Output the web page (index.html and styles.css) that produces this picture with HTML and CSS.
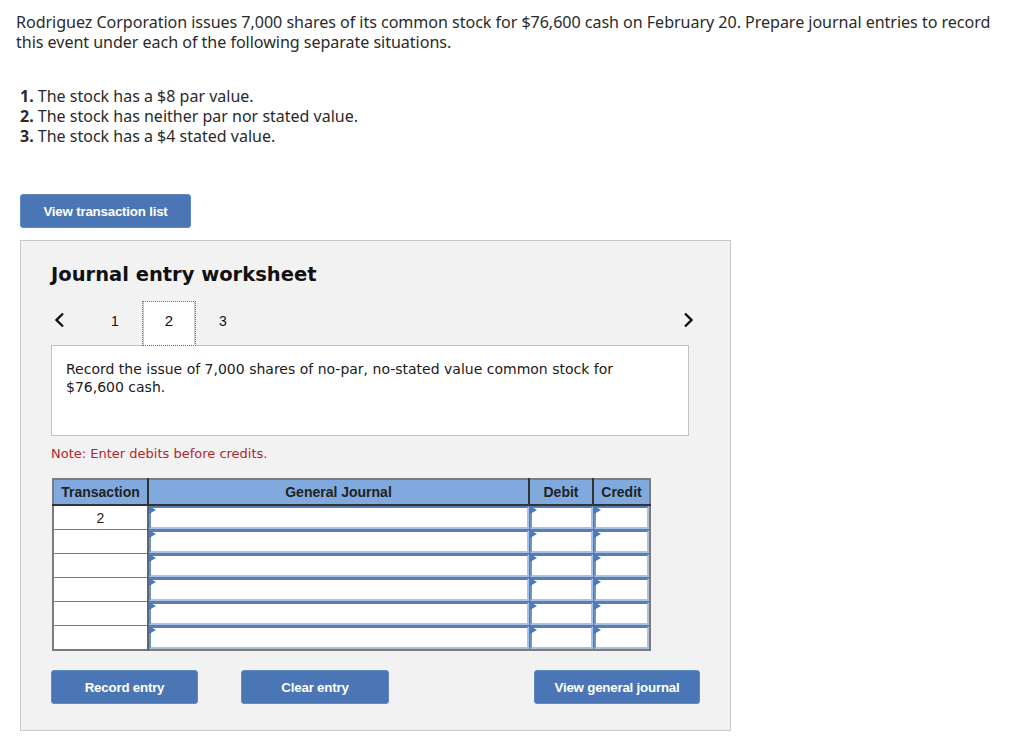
FILE: index.html
```html
<!DOCTYPE html>
<html>
<head>
<meta charset="utf-8">
<link rel="stylesheet" href="styles.css">
</head>
<body>
<div class="page">
  <p class="question">Rodriguez Corporation issues 7,000 shares of its common stock for $76,600 cash on February 20. Prepare journal entries to record this event under each of the following separate situations.</p>
  <ol class="situations">
    <li><b>1.</b> The stock has a $8 par value.</li>
    <li><b>2.</b> The stock has neither par nor stated value.</li>
    <li><b>3.</b> The stock has a $4 stated value.</li>
  </ol>
  <button class="btn btn-list">View transaction list</button>
  <div class="panel">
    <h2 class="title">Journal entry worksheet</h2>
    <div class="nav">
      <span class="chev chev-left"><svg width="12" height="16" viewBox="0 0 12 16"><polyline points="9,1.5 2.5,8 9,14.5" fill="none" stroke="#111" stroke-width="2.4"/></svg></span>
      <span class="step">1</span>
      <span class="step step-active">2</span>
      <span class="step">3</span>
      <span class="chev chev-right"><svg width="12" height="16" viewBox="0 0 12 16"><polyline points="3,1.5 9.5,8 3,14.5" fill="none" stroke="#111" stroke-width="2.4"/></svg></span>
    </div>
    <div class="desc">Record the issue of 7,000 shares of no-par, no-stated value common stock for $76,600 cash.</div>
    <p class="note">Note: Enter debits before credits.</p>
    <table class="journal">
      <colgroup>
        <col class="c-tr"><col class="c-gj"><col class="c-dr"><col class="c-cr">
      </colgroup>
      <thead>
        <tr><th>Transaction</th><th>General Journal</th><th>Debit</th><th>Credit</th></tr>
      </thead>
      <tbody>
        <tr><td class="tr">2</td><td class="inp"><div class="box"></div></td><td class="inp"><div class="box"></div></td><td class="inp"><div class="box"></div></td></tr>
        <tr><td class="tr"></td><td class="inp"><div class="box"></div></td><td class="inp"><div class="box"></div></td><td class="inp"><div class="box"></div></td></tr>
        <tr><td class="tr"></td><td class="inp"><div class="box"></div></td><td class="inp"><div class="box"></div></td><td class="inp"><div class="box"></div></td></tr>
        <tr><td class="tr"></td><td class="inp"><div class="box"></div></td><td class="inp"><div class="box"></div></td><td class="inp"><div class="box"></div></td></tr>
        <tr><td class="tr"></td><td class="inp"><div class="box"></div></td><td class="inp"><div class="box"></div></td><td class="inp"><div class="box"></div></td></tr>
        <tr><td class="tr"></td><td class="inp"><div class="box"></div></td><td class="inp"><div class="box"></div></td><td class="inp"><div class="box"></div></td></tr>
      </tbody>
    </table>
    <div class="actions">
      <button class="btn btn-record">Record entry</button>
      <button class="btn btn-clear">Clear entry</button>
      <button class="btn btn-view">View general journal</button>
    </div>
  </div>
</div>
</body>
</html>
```
FILE: styles.css
```css
* { box-sizing: border-box; }
html, body { margin: 0; padding: 0; background: #fff; }
.page { padding: 12px 0 0 16px; width: 1024px; }
.question {
  margin: 0;
  font-family: "Noto Sans", "Open Sans", sans-serif;
  font-size: 16.1px;
  line-height: 20px;
  color: #2a2a2a;
  width: 992px;
  letter-spacing: -0.05px;
}
.situations {
  list-style: none;
  margin: 34px 0 0 4px;
  padding: 0;
  font-family: "Noto Sans", "Open Sans", sans-serif;
  font-size: 16px;
  line-height: 20px;
  color: #2a2a2a;
}
.situations b { font-weight: 700; }
.btn {
  display: block;
  background: #4a76b5;
  color: #fff;
  border: 1px solid #5f88c4;
  border-radius: 3px;
  font-family: "Liberation Sans", Arial, sans-serif;
  font-weight: 700;
  font-size: 13.3px;
  height: 34px;
  padding: 0;
  letter-spacing: -0.2px;
}
.btn-list { margin: 48px 0 0 4px; width: 171px; }
.panel {
  margin: 12px 0 0 4px;
  width: 711px;
  background: #f2f2f2;
  border: 1px solid #c8c8c8;
  padding: 22px 30px 26px 30px;
}
.title {
  margin: 0;
  font-family: "DejaVu Sans", Verdana, sans-serif;
  font-weight: 700;
  font-size: 19.5px;
  line-height: 24px;
  color: #111;
}
.nav {
  margin-top: 14px;
  height: 45px;
  display: flex;
  align-items: stretch;
  margin-bottom: -1px;
  position: relative;
  z-index: 1;
  font-family: "Liberation Sans", Arial, sans-serif;
  font-size: 14px;
  color: #111;
}
.chev { display: flex; align-items: center; padding-bottom: 8px; }
.chev-left { width: 37px; padding-left: 3px; }
.chev-right { margin-left: auto; margin-right: 6px; }
.step {
  width: 54px;
  display: flex;
  align-items: center;
  justify-content: center;
  padding-bottom: 6px;
}
.step-active {
  background: #fff;
  border: 1px dotted #3f73c4;
  box-shadow: inset 1px 0 0 #c9c9c9, inset -1px 0 0 #c9c9c9;
  font-size: 15px;
}
.desc {
  width: 638px;
  height: 91px;
  background: #fff;
  border: 1px solid #c2c2c2;
  padding: 14px 40px 14px 14px;
  font-family: "DejaVu Sans", Verdana, sans-serif;
  font-size: 14px;
  line-height: 18px;
  color: #1a1a1a;
}
.note {
  margin: 9px 0 0 0;
  font-family: "DejaVu Sans", Verdana, sans-serif;
  font-size: 13px;
  line-height: 18px;
  color: #b1262b;
}
.journal {
  margin: 15px 0 0 1px;
  width: 597px;
  border-collapse: collapse;
  table-layout: fixed;
  border: 2px solid #7b7b7b;
  font-family: "Liberation Sans", Arial, sans-serif;
  font-size: 14px;
  color: #222;
}
.c-tr { width: 95px; }
.c-gj { width: 381px; }
.c-dr { width: 64px; }
.c-cr { width: 57px; }
.journal th {
  height: 26px;
  background: #80a9de;
  font-weight: 700;
  border-left: 2px solid #333;
  border-bottom: 2px solid #333;
  padding: 0;
}
.journal th:first-child { border-left: none; }
.journal td {
  height: 24px;
  padding: 0;
  border: 1px solid #7d7d7d;
  background: #fff;
}
.journal td.tr { text-align: center; border-right: 2px solid #5e6670; }
.journal td.inp { border: 1px solid #6c7888; }
.box {
  position: relative;
  height: 23px;
  border: 2px solid #6d93cc;
  border-top-color: #5b7fb5;
  border-bottom-color: #a8c0e2;
  border-right-color: #a8c0e2;
  background: #fff;
}
.box::before {
  content: "";
  position: absolute;
  left: -2px;
  top: -2px;
  border-left: 7px solid #4a7bc2;
  border-top: 4px solid transparent;
  border-bottom: 4px solid transparent;
}
.actions {
  margin-top: 19px;
  display: flex;
}
.btn-record { width: 147px; }
.btn-clear { width: 148px; margin-left: 43px; }
.btn-view { width: 166px; margin-left: auto; }
```
